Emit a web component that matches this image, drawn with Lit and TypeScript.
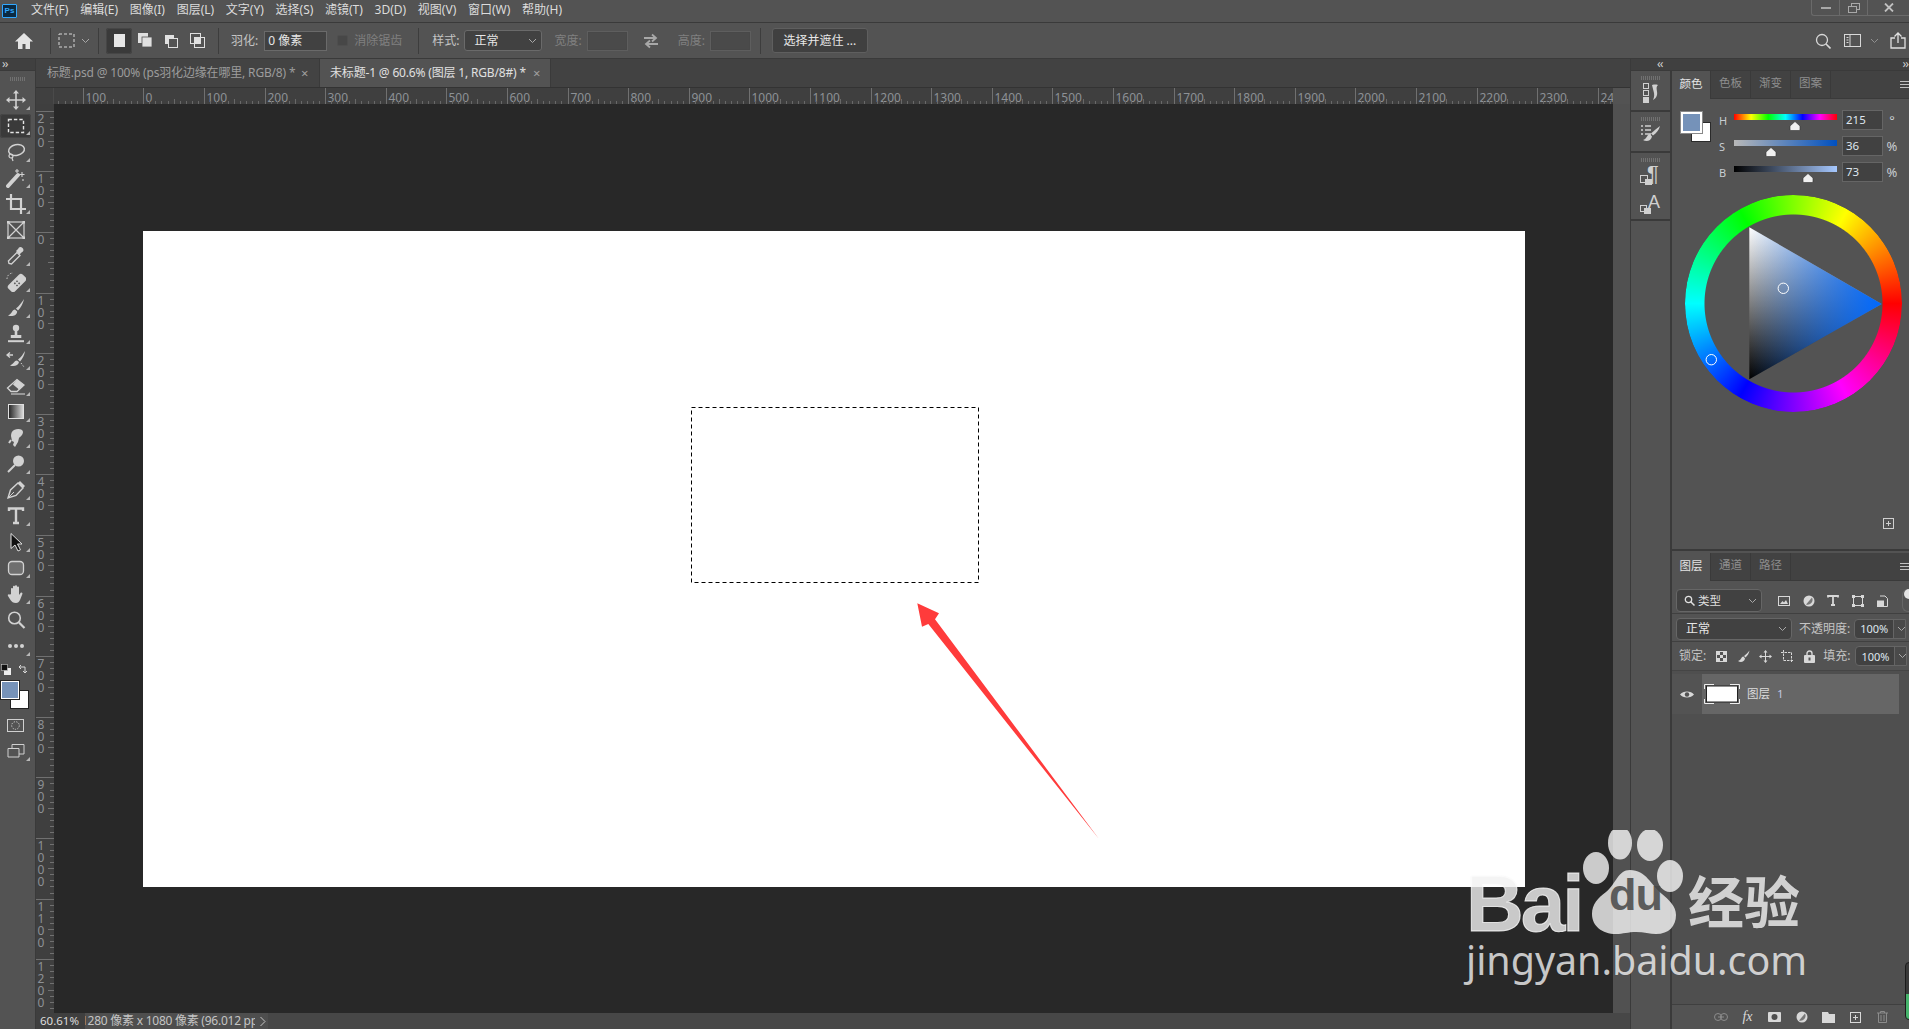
import { LitElement, html, css, svg } from "lit";
import { customElement } from "lit/decorators.js";

const MENU = ["文件(F)", "编辑(E)", "图像(I)", "图层(L)", "文字(Y)", "选择(S)", "滤镜(T)", "3D(D)", "视图(V)", "窗口(W)", "帮助(H)"];

const C = "#d2d2d2";
const chev = html`<svg class="chev" width="9" height="6" viewBox="0 0 9 6"><path d="M1 1l3.5 3.5L8 1" fill="none" stroke="#a8a8a8" stroke-width="1"/></svg>`;

const TOOLS: { i: any; m?: boolean; sel?: boolean }[] = [
  { m: true, i: svg`<path d="M10 3v14M3 10h14" stroke="${C}" stroke-width="1.6"/><path d="M10 0l3 3.5H7zM10 20l3-3.5H7zM0 10l3.5-3v6zM20 10l-3.5-3v6z" fill="${C}"/>` },
  { m: true, sel: true, i: svg`<rect x="2.5" y="3.5" width="15" height="13" fill="none" stroke="#e4e4e4" stroke-width="1.4" stroke-dasharray="3.4 2"/>` },
  { m: true, i: svg`<ellipse cx="10.5" cy="8" rx="8" ry="5.4" fill="none" stroke="${C}" stroke-width="1.5" transform="rotate(-12 10.5 8)"/><circle cx="5" cy="14" r="2" fill="none" stroke="${C}" stroke-width="1.2"/><path d="M6 16l1 3" stroke="${C}" stroke-width="1.2"/>` },
  { m: true, i: svg`<path d="M2 18L12 7" stroke="${C}" stroke-width="4" stroke-linecap="round"/><path d="M11 1v4M9 3h4M16 4v5M13.5 6.500h5M17 11v2" stroke="${C}" stroke-width="1.1"/>` },
  { m: true, i: svg`<path d="M5 0v15h15M0 5h15v15" fill="none" stroke="${C}" stroke-width="2.2"/>` },
  { i: svg`<rect x="2" y="2" width="16" height="16" fill="none" stroke="${C}" stroke-width="1.2"/><path d="M2 2l16 16M18 2L2 18" stroke="${C}" stroke-width="1.2"/><path d="M1 1h2.500v2.500H1zM16.500 1H19v2.500h-2.500zM1 16.500h2.500V19H1zM16.500 16.500H19V19h-2.500z" fill="${C}"/>` },
  { m: true, i: svg`<path d="M3 17.500l-.6-2.500L11 6.500l3 3-8.500 8.500z" fill="none" stroke="${C}" stroke-width="1.3"/><path d="M10 5l2-2 1-1.500c1-1 2.500-.6 3.500.4s1.400 2.500.4 3.500l-1.400 1-2 2z" fill="${C}"/>` },
  { m: true, i: svg`<g transform="rotate(45 11 11)"><rect x="6.500" y="1" width="9" height="20" rx="2.500" fill="${C}"/><path d="M9 9h1.500v1.500H9zM12 9h1.500v1.500H12zM9 12h1.500v1.500H9zM12 12h1.500v1.500H12z" fill="#535353"/></g><path d="M1 7a6 6 0 016-6" fill="none" stroke="${C}" stroke-dasharray="1.500 1.500"/>` },
  { m: true, i: svg`<path d="M18 1c-2 3-5 7-8 9.500l2 2C15 9.500 17.500 4.500 18 1z" fill="${C}"/><path d="M9 11.500c-3 0-2.500 4-7 6 4 1.500 9 0 9.200-4z" fill="${C}"/>` },
  { m: true, i: svg`<circle cx="10" cy="4" r="3.200" fill="${C}"/><path d="M8.700 6h2.600v5h4v3H4.800v-3h3.900z" fill="${C}"/><path d="M2 16.200h16v2H2z" fill="${C}"/>` },
  { m: true, i: svg`<path d="M19 1c-2 3-4 6.500-7 8.500l2 2c2.500-3 4.500-6.500 5-10.500z" fill="${C}"/><path d="M11 10.500c-3 0-3 3.500-7 5 4 1.500 8.500 0 9-3.500z" fill="${C}"/><path d="M2 5h5M4 2.500L1 5l3 2.500" fill="none" stroke="${C}" stroke-width="1.400"/><path d="M15 13l3 4" stroke="${C}" stroke-dasharray="1.500 1.500"/>` },
  { m: true, i: svg`<path d="M1.500 12L11 3.500l7 5.500-7 6.500H5z" fill="none" stroke="${C}" stroke-width="1.300"/><path d="M7 8.500L11 3.500l7 5.500-5 4.500z" fill="${C}"/><path d="M5 18h14" stroke="${C}" stroke-width="1.100"/>` },
  { m: true, i: svg`<defs><linearGradient id="tg"><stop offset="0" stop-color="#222"/><stop offset="1" stop-color="#ddd"/></linearGradient></defs><rect x="2.500" y="2.500" width="15" height="14" fill="url(#tg)" stroke="#e0e0e0"/>` },
  { m: true, i: svg`<path d="M8 2c4-2 9-1 9 2 0 3-3 5-4 6l-1 4-3 5-2-2 1-3-2-1-1-5c0-3 1-5 3-6z" fill="${C}"/><path d="M5 12l-2 3" stroke="${C}" stroke-width="2"/>` },
  { m: true, i: svg`<circle cx="12.500" cy="7" r="5.500" fill="${C}"/><path d="M9 11L2 18" stroke="${C}" stroke-width="2"/>` },
  { m: true, i: svg`<path d="M2 18l2.500-8L12 3l5 5-7 7.500z" fill="none" stroke="${C}" stroke-width="1.400"/><path d="M12 3l2-2 5 5-2 2z" fill="${C}"/><path d="M2 18l6-6" stroke="${C}"/>` },
  { m: true, i: svg`<path d="M3 5V2.500h14V5M10 2.500v14M7 17h6" fill="none" stroke="${C}" stroke-width="2.400"/>` },
  { m: true, i: svg`<path d="M5 1.500v15l4-3.500 3 6 2.500-1.200-3-5.800H16z" fill="#111" stroke="#e0e0e0" stroke-width="1"/>` },
  { m: true, i: svg`<rect x="2.500" y="3.500" width="15" height="13" rx="3.500" fill="#6f6f6f" stroke="${C}" stroke-width="1.300"/>` },
  { m: true, i: svg`<path d="M5 10V5c0-1.300 2-1.300 2 0v3V2.800c0-1.300 2-1.300 2 0V8V2.200c0-1.300 2-1.300 2 0V8V3.500c0-1.300 2-1.300 2 0V11l1.500-2c1-1 2.500 0 1.800 1.200L14 16c-1 2-2 3-4 3-3 0-4-1-5.500-3L2 12c-.8-1.300.8-2.300 1.800-1.300z" fill="${C}"/>` },
  { m: false, i: svg`<circle cx="8.500" cy="8" r="5.800" fill="none" stroke="${C}" stroke-width="1.600"/><path d="M13 12.500l5.500 5.500" stroke="${C}" stroke-width="2.200"/>` },
  { m: true, i: svg`<circle cx="4" cy="10" r="2" fill="${C}"/><circle cx="10" cy="10" r="2" fill="${C}"/><circle cx="16" cy="10" r="2" fill="${C}"/>` },
];

@customElement("app-root")
export class AppRoot extends LitElement {
  static styles = css`
    :host {
      display: block;
      width: 1909px;
      height: 1029px;
      overflow: hidden;
      position: relative;
      background: #535353;
      font: 12px/1 "Noto Sans", "Noto Sans CJK SC", sans-serif;
      color: #d6d6d6;
    }
    svg { display: block; flex: none; }
    .app { display: flex; flex-direction: column; height: 100%; }

    .menubar { height: 22px; flex: none; display: flex; align-items: center; border-bottom: 1px solid #3a3a3a; position: relative; box-sizing: content-box; }
    .logo { width: 15px; height: 14px; margin-left: 2px; background: #0b2a42; border: 1px solid #31a8ff; box-sizing: border-box; color: #31a8ff; font: bold 8px/12px "Liberation Sans", sans-serif; text-align: center; border-radius: 1px; }
    .menus { display: flex; gap: 11.700px; margin-left: 14px; padding-bottom: 2px; color: #dcdcdc; font-size: 12px; }
    .winbtns { margin-left: auto; display: flex; height: 16px; align-self: flex-start; width: 98px; border: 1px solid #6a6a6a; border-width: 0 0 1px 1px; box-sizing: border-box; border-radius: 0 0 0 3px; }
    .winbtns div { display: flex; align-items: center; justify-content: center; height: 100%; border-left: 1px solid #6a6a6a; width: 27px; }
    .winbtns div:first-child { border-left: none; }
    .winbtns div:last-child { flex: 1; }

    .optbar { height: 35px; flex: none; display: flex; align-items: center; border-bottom: 1px solid #3a3a3a; }
    .sep { width: 1px; height: 26px; background: #3d3d3d; flex: none; }
    .homeseg { width: 50px; padding-left: 14px; box-sizing: border-box; }
    .marq { width: 47px; padding-left: 7px; box-sizing: border-box; display: flex; align-items: center; gap: 6px; }
    .modes { display: flex; margin-left: 7px; margin-right: 8px; }
    .modes div { width: 26px; height: 26px; display: flex; align-items: center; justify-content: center; border-radius: 3px; }
    .modes .on { background: #3a3a3a; box-shadow: inset 0 0 0 1px #464646; }
    .lab { color: #c4c4c4; white-space: nowrap; }
    .dim { color: #808080; }
    .ml3 { margin-left: 3px; } .ml4 { margin-left: 4px; } .ml5 { margin-left: 5px; } .ml6 { margin-left: 6px; } .ml7 { margin-left: 7px; }
    .ml9 { margin-left: 9px; } .ml10 { margin-left: 10px; } .ml11 { margin-left: 11px; } .ml12 { margin-left: 12px; } .ml13 { margin-left: 13px; }
    .ml14 { margin-left: 14px; } .ml16 { margin-left: 16px; } .ml17 { margin-left: 17px; } .ml18 { margin-left: 18px; }
    .inp { box-sizing: border-box; height: 20px; border: 1px solid #6a6a6a; background: #414141; color: #e6e6e6; display: flex; align-items: center; padding-left: 3px; flex: none; }
    .w63 { width: 63px; }
    .inp.off { width: 41px; background: #4a4a4a; border-color: #5e5e5e; box-shadow: inset 0 0 0 1px #484848; }
    .check { width: 9px; height: 9px; background: #474747; border: 1px solid #4e4e4e; border-radius: 2px; flex: none; }
    .select { box-sizing: border-box; height: 21px; width: 78px; border: 1px solid #6a6a6a; background: #414141; border-radius: 3px; display: flex; align-items: center; justify-content: space-between; padding: 0 4px 0 9px; color: #e6e6e6; flex: none; }
    .btn { box-sizing: border-box; height: 25px; width: 96px; background: #404040; border: 1px solid #5f5f5f; border-radius: 3px; display: flex; align-items: center; justify-content: center; color: #e8e8e8; flex: none; }
    .optright { margin-left: auto; display: flex; align-items: center; padding-right: 3px; }

    .main { flex: 1; display: flex; min-height: 0; }
    .toolbox { width: 35px; flex: none; border-right: 1px solid #3a3a3a; box-sizing: content-box; display: flex; flex-direction: column; }
    .tbhead { height: 11px; background: #404040; border-bottom: 1px solid #3a3a3a; color: #d0d0d0; font-size: 12px; line-height: 9px; padding-left: 2px; letter-spacing: -1px; flex: none; }
    .grip { height: 16px; display: flex; align-items: center; justify-content: center; flex: none; }
    .gripbar { width: 16px; height: 4px; background: repeating-linear-gradient(90deg, #717171 0 1px, transparent 1px 2px); }
    .tool { height: 26px; width: 31px; margin-left: 0; display: flex; align-items: center; justify-content: center; position: relative; border-radius: 3px; flex: none; }
    .tool.sel { background: #3a3a3a; box-shadow: inset 0 0 0 1px #464646; height: 24px; margin: 1px 0; }
    .tool.m::after { content: ""; position: absolute; right: 1px; bottom: 3px; border-style: solid; border-width: 0 0 4px 4px; border-color: transparent transparent #b8b8b8 transparent; }
    .colors { height: 48px; position: relative; flex: none; }
    .mini { display: flex; justify-content: space-between; padding: 5px 7px 0 1px; }
    .fg { position: absolute; left: 1px; top: 22px; width: 18px; height: 18px; background: #7592b9; border: 1px solid #fff; outline: 1px solid #222; box-sizing: border-box; z-index: 1; }
    .bg { position: absolute; left: 10px; top: 31px; width: 19px; height: 19px; background: #fff; border: 1px solid #222; box-sizing: border-box; }
    .tool2 { height: 26px; display: flex; align-items: center; justify-content: center; width: 31px; flex: none; position: relative; }
    .colors + .tool2 { margin-top: 5px; }

    .doc { width: 1594px; flex: none; display: flex; flex-direction: column; }
    .tabs { height: 29px; flex: none; display: flex; background: #424242; border-bottom: 1px solid #333; box-sizing: border-box; }
    .tab { display: flex; align-items: center; padding-left: 11px; box-sizing: border-box; height: 100%; color: #9c9c9c; position: relative; white-space: nowrap; letter-spacing: -0.170px; }
    .tab b { font-weight: 400; position: absolute; color: #a0a0a0; font-size: 13px; }
    .tab1 { width: 284px; background: #434343; border-right: 1px solid #3a3a3a; }
    .tab1 b { left: 265px; }
    .tab2 { width: 231px; background: #535353; color: #e0e0e0; padding-left: 10px; border-right: 1px solid #3a3a3a; }
    .tab2 b { left: 213px; }
    .rulerrow { height: 16px; flex: none; display: flex; }
    .corner { width: 18px; background: #404040; flex: none; border-right: 1px solid #4a4a4a; box-sizing: border-box; }
    .hr { width: 1559px; height: 16px; background: #3f3f3f; flex: none; overflow: visible; }
    .rfill { flex: 1; background: #535353; }
    .rtext { font: 12px "Noto Sans", sans-serif; fill: #8d9196; }
    .work { flex: 1; display: flex; min-height: 0; }
    .vr { width: 18px; background: #3f3f3f; flex: none; }
    .canvas { width: 1559px; flex: none; background: #282828; padding: 127px 0 0 89px; box-sizing: border-box; overflow: hidden; }
    .page { width: 1382px; height: 656px; background: #fff; position: relative; }
    .overlay { position: absolute; left: 0; top: 0; }
    .scroll { flex: 1; background: #515151; }
    .status { height: 16px; flex: none; display: flex; background: #474747; color: #c4c4c4; font-size: 12px; align-items: center; }
    .zoomv { width: 49px; height: 100%; background: #3f3f3f; padding-left: 4px; box-sizing: border-box; display: flex; align-items: center; color: #dcdcdc; font-size: 11.500px; }
    .sinfo { width: 170px; height: 100%; overflow: hidden; background: #4e4e4e; white-space: nowrap; display: flex; align-items: center; letter-spacing: -0.250px; }
    .sinfo span { margin-left: -4px; }
    .sarrow { width: 13px; height: 100%; background: #4e4e4e; display: flex; align-items: center; padding-left: 4px; box-sizing: border-box; }

    .right { width: 278px; flex: none; border-left: 1px solid #3a3a3a; display: flex; flex-direction: column; }
    .rstrip { height: 11px; flex: none; background: #404040; border-bottom: 1px solid #3a3a3a; display: flex; justify-content: space-between; font-size: 12px; line-height: 9px; color: #d0d0d0; letter-spacing: -1px; padding-left: 26px; padding-right: 1px; }
    .rbody { flex: 1; display: flex; min-height: 0; }
    .dock { width: 39px; flex: none; margin-left: 0; border-right: 2px solid #3a3a3a; display: flex; flex-direction: column; }
    .dgroup { border-bottom: 2px solid #3a3a3a; display: flex; flex-direction: column; align-items: center; flex: none; }
    .dg1 { height: 39px; } .dg2 { height: 39px; } .dg3 { height: 66px; }
    .dgrip { height: 8px; width: 20px; margin-top: 3px; background: repeating-linear-gradient(90deg, #717171 0 1px, transparent 1px 2px) center / 100% 4px no-repeat; flex: none; }
    .up2 { margin-top: -2px; }
    .down5 { margin-top: 5px; }
    .panels { flex: 1; min-width: 0; display: flex; flex-direction: column; overflow: hidden; }
    .ptabs { height: 28px; flex: none; display: flex; background: #424242; position: relative; }
    .ptab { width: 40px; display: flex; align-items: center; justify-content: center; color: #8e8e8e; font-size: 11.500px; border-right: 1px solid #3a3a3a; border-bottom: 1px solid #3a3a3a; box-sizing: border-box; padding-bottom: 3px; }
    .ptab.on { background: #535353; color: #e4e4e4; width: 39px; border-bottom: none; }
    .ptabfill { flex: 1; border-bottom: 1px solid #3a3a3a; display: flex; justify-content: flex-end; align-items: center; }
    .upper { height: 480px; flex: none; display: flex; flex-direction: column; border-bottom: 2px solid #3a3a3a; box-sizing: border-box; }
    .cbody { display: flex; padding: 11px 0 0 9px; }
    .sw { position: relative; width: 38px; height: 32px; flex: none; margin-top: 2px; }
    .sw .f { position: absolute; left: 0; top: 0; width: 21px; height: 21px; background: #7592b9; border: 2px solid #fff; outline: 1px solid #888; outline-offset: 0; box-sizing: border-box; z-index: 1; }
    .sw .b { position: absolute; left: 10px; top: 10px; width: 20px; height: 20px; background: #fff; border: 1px solid #2a2a2a; box-sizing: border-box; }
    .rows { display: flex; flex-direction: column; gap: 6px; }
    .crow { display: flex; height: 20px; color: #c8cdd2; }
    .clab { width: 15px; font-size: 11px; line-height: 22px; }
    .track { width: 103px; height: 6px; margin-top: 4px; position: relative; flex: none; }
    .thumb { position: absolute; top: 7px; }
    .hue { background: linear-gradient(90deg, #f00, #ff0 16.600%, #0f0 33.300%, #0ff 50%, #00f 66.600%, #f0f 83.300%, #f00); }
    .sat { background: linear-gradient(90deg, #b8b8b8, #0050c0); }
    .bri { background: linear-gradient(90deg, #000, #a6c8ff); }
    .val { box-sizing: border-box; width: 41px; height: 20px; margin-left: 5px; border: 1px solid #656565; background: #414141; color: #dfe6ee; font-size: 11.500px; display: flex; align-items: center; padding-left: 3px; flex: none; }
    .unit { width: 18px; text-align: center; font-size: 13px; line-height: 20px; color: #c8cdd2; }
    .wheelwrap { margin: 13px 0 0 13px; width: 217px; height: 217px; position: relative; flex: none; }
    .wheel { width: 217px; height: 217px; border-radius: 50%; background: conic-gradient(from 90deg, #f00, #f0f, #00f, #0ff, #0f0, #ff0, #f00); -webkit-mask: radial-gradient(circle, transparent 88.500px, #000 89.500px); mask: radial-gradient(circle, transparent 88.500px, #000 89.500px); }
    .pfoot { margin-top: auto; padding: 0 15px 20px 0; display: flex; justify-content: flex-end; }

    .lower { flex: 1; display: flex; flex-direction: column; min-height: 0; padding-top: 2px; box-sizing: border-box; position: relative; }
    .lrow { display: flex; align-items: center; flex: none; }
    .l1 { height: 33px; border-bottom: 1px solid #404040; padding-left: 4px; box-sizing: border-box; padding-top: 7px; }
    .l2 { height: 28px; border-bottom: 1px solid #404040; padding-left: 4px; box-sizing: border-box; padding-top: 2px; }
    .l3 { height: 29px; border-bottom: 1px solid #454545; padding-left: 7px; box-sizing: border-box; }
    .filter { box-sizing: border-box; width: 86px; height: 23px; border: 1px solid #666; border-radius: 4px; background: #414141; display: flex; align-items: center; padding: 0 4px 0 7px; gap: 3px; color: #dedede; flex: none; font-size: 11.500px; }
    .filter .g { flex: 1; }
    .licons { display: flex; gap: 0; margin-left: 10px; align-items: center; }
    .licons div { width: 24.500px; display: flex; justify-content: center; }
    .toggle { width: 14px; height: 23px; margin-left: 7px; border: 1px solid #666; border-right: none; border-radius: 6px 0 0 6px; position: relative; box-sizing: border-box; flex: none; }
    .toggle::after { content: ""; position: absolute; left: 1px; top: -1px; width: 10px; height: 10px; background: #e4e4e4; border-radius: 50%; }
    .bl { box-sizing: border-box; width: 116px; height: 22px; border: 1px solid #666; border-radius: 4px; background: #414141; display: flex; align-items: center; justify-content: space-between; padding: 0 4px 0 9px; color: #e6e6e6; flex: none; }
    .pct { box-sizing: border-box; width: 52px; height: 20px; border: 1px solid #656565; border-radius: 4px 0 0 4px; background: #414141; display: flex; align-items: center; flex: none; color: #dfe6ee; font-size: 11px; overflow: hidden; }
    .pct span { width: 38px; text-align: center; flex: none; }
    .pct i { width: 14px; height: 100%; border-left: 1px solid #656565; background: #4a4a4a; display: flex; align-items: center; justify-content: center; flex: none; }
    .lk { display: flex; margin-left: 4px; }
    .lk div { width: 22px; display: flex; justify-content: center; align-items: center; }
    .layers { flex: 1; background: #4f4f4f; min-height: 0; }
    .layer { height: 40px; margin-top: 3px; display: flex; background: #535353; width: 227px; }
    .eye { width: 30px; display: flex; align-items: center; justify-content: center; flex: none; }
    .lbody { width: 197px; background: #666; display: flex; align-items: center; flex: none; padding-left: 2px; box-sizing: border-box; color: #dcdcdc; }
    .thumbl { width: 36px; height: 20px; position: relative; flex: none; }
    .thumbl svg { position: absolute; left: 0; top: 0; }
    .lname { margin-left: 7px; font-size: 11.500px; }
    .lname em { font-style: normal; color: #c0c8e0; margin-left: 7px; }
    .lfoot { height: 25px; flex: none; border-top: 1px solid #3f3f3f; display: flex; align-items: center; box-sizing: border-box; padding-left: 35px; }
    .lfoot div { width: 27px; display: flex; justify-content: center; align-items: center; position: relative; }
    .fx { font: italic 14px "Liberation Serif", serif; color: #d8d8d8; }
    .meter { position: absolute; right: -1px; bottom: 9px; width: 5px; height: 58px; border: 1px solid #1c1c1c; border-radius: 4px 0 0 4px; background: linear-gradient(180deg, #3a3a3a 0 55%, #46b46c 55% 100%); box-sizing: border-box; }

    .wm { position: absolute; left: 1460px; top: 830px; width: 360px; height: 165px; color: rgba(255,255,255,.76); text-shadow: 0 0 1px rgba(0,0,0,.18); pointer-events: none; }
    .wmtop { display: flex; align-items: flex-start; height: 104px; }
    .bai { font: bold 80px/1 "Liberation Sans", sans-serif; -webkit-text-stroke: 1px rgba(255,255,255,.76); margin: 34px 0 0 6px; letter-spacing: -3px; width: 114px; flex: none; }
    .paw { margin-left: 0; flex: none; position: relative; width: 108px; height: 104px; margin-right: 0; }
    .du { position: absolute; left: 29px; top: 42px; font: bold 45px/1 "Liberation Sans", sans-serif; color: rgba(70,70,70,.85); letter-spacing: -1px; text-shadow: none; }
    .jy { font: bold 56px/1 "Noto Sans CJK SC", sans-serif; margin-top: 41px; flex: none; margin-left: 0; white-space: nowrap; }
    .url { font: 39.400px/1 "Noto Sans", sans-serif; margin: 7px 0 0 6px; white-space: nowrap; }
  `;

  hticks() {
    const out: any[] = [];
    const x0 = 143.3 - 54;
    for (let i = -20; i <= 250; i++) {
      const x = Math.round(x0 + (i * 60.6) / 10) + 0.5;
      if (x < 0 || x > 1559) continue;
      const h = i % 10 === 0 ? 16 : i % 5 === 0 ? 5 : 3;
      out.push(svg`<line x1="${x}" x2="${x}" y1="${16 - h}" y2="16" stroke="${i % 10 === 0 ? "#707070" : "#686868"}"/>`);
      if (i % 10 === 0 && x < 1535) {
        const v = Math.abs(i * 10);
        out.push(svg`<text class="rtext" x="${x + 2}" y="14">${v}</text>`);
      } else if (i % 10 === 0) {
        out.push(svg`<text class="rtext" x="${x + 2}" y="14">24</text>`);
      }
    }
    return out;
  }

  vticks() {
    const out: any[] = [];
    const y0 = 232 - 104;
    for (let i = -20; i <= 130; i++) {
      const y = Math.round(y0 + (i * 60.6) / 10) + 0.5;
      if (y < 0 || y > 909) continue;
      const major = i % 10 === 0;
      const x1 = major ? 0 : i % 5 === 0 ? 12 : 14;
      out.push(svg`<line x1="${x1}" x2="18" y1="${y}" y2="${y}" stroke="#707070"/>`);
      if (major) {
        const digits = String(Math.abs(i * 10)).split("");
        out.push(svg`<text class="rtext" y="${y + 11}">${digits.map((d, k) => svg`<tspan x="1.500" dy="${k === 0 ? 0 : 12}">${d}</tspan>`)}</text>`);
      }
    }
    return out;
  }

  thumbIcon() {
    return html`<svg width="12" height="10" viewBox="0 0 12 10"><path d="M6 .5L11 5v3.500a1 1 0 01-1 1H2a1 1 0 01-1-1V5z" fill="#f0f0f0" stroke="#333" stroke-width=".6"/></svg>`;
  }

  drawOptions() {
    const modeIc = "#e0e0e0";
    return html`<div class="optbar">
      <div class="homeseg"><svg width="20" height="18" viewBox="0 0 20 18"><path d="M10 1L1 9.500h3V17h4.500v-5h3v5H16V9.500h3z" fill="#e4e4e4"/></svg></div>
      <div class="sep"></div>
      <div class="marq"><svg width="17" height="15" viewBox="0 0 17 15"><rect x="1" y="1" width="15" height="13" fill="none" stroke="#d8d8d8" stroke-dasharray="3 2"/></svg>${chev}</div>
      <div class="sep"></div>
      <div class="modes">
        <div class="on"><svg width="11" height="13"><rect width="11" height="13" fill="#e6e6e6"/></svg></div>
        <div><svg width="15" height="15"><rect width="10" height="10" fill="${modeIc}"/><rect x="4" y="4" width="10" height="10" fill="${modeIc}" stroke="#535353" stroke-width=".8"/></svg></div>
        <div><svg width="14" height="14"><rect x="1" y="1" width="9" height="9" fill="${modeIc}"/><rect x="4.500" y="4.500" width="9" height="9" fill="#535353" stroke="${modeIc}"/></svg></div>
        <div><svg width="15" height="15"><rect x=".5" y=".5" width="10" height="10" fill="none" stroke="${modeIc}"/><rect x="4.500" y="4.500" width="10" height="10" fill="none" stroke="${modeIc}"/><rect x="4.500" y="4.500" width="6" height="6" fill="${modeIc}"/></svg></div>
      </div>
      <div class="sep"></div>
      <span class="lab ml12">羽化:</span>
      <div class="inp w63 ml6">0 像素</div>
      <div class="check ml10"></div>
      <span class="lab dim ml6">消除锯齿</span>
      <div class="sep ml16"></div>
      <span class="lab ml13">样式:</span>
      <div class="select ml5">正常 ${chev}</div>
      <span class="lab dim ml12">宽度:</span>
      <div class="inp off ml5"></div>
      <svg class="ml14" width="18" height="16" viewBox="0 0 18 16"><path d="M2 5h11M10 1.500L14 5l-4 3.500M16 11H5M8 7.500L4 11l4 3.500" fill="none" stroke="#a8a8a8" stroke-width="1.800"/></svg>
      <span class="lab dim ml18">高度:</span>
      <div class="inp off ml5"></div>
      <div class="sep ml9"></div>
      <div class="btn ml11">选择并遮住 ...</div>
      <div class="optright">
        <svg width="16" height="16" viewBox="0 0 16 16"><circle cx="7" cy="7" r="5.500" fill="none" stroke="#d8d8d8" stroke-width="1.300"/><path d="M11 11l4.500 4.500" stroke="#d8d8d8" stroke-width="1.600"/></svg>
        <svg class="ml13" width="17" height="13" viewBox="0 0 17 13"><rect x=".5" y=".5" width="16" height="12" fill="none" stroke="#d8d8d8"/><path d="M6 .5v12" stroke="#d8d8d8"/><path d="M2.500 3.500h2M2.500 6h2M2.500 8.500h2" stroke="#d8d8d8"/></svg>
        <svg class="ml9" width="9" height="6" viewBox="0 0 9 6"><path d="M1 1l3.500 3.500L8 1" fill="none" stroke="#909090"/></svg>
        <svg class="ml11" width="16" height="17" viewBox="0 0 16 17"><path d="M5 6H1v10h14V6h-4" fill="none" stroke="#e0e0e0" stroke-width="1.300"/><path d="M8 11V1.500M4.500 4.500L8 1l3.500 3.500" fill="none" stroke="#e0e0e0" stroke-width="1.300"/></svg>
      </div>
    </div>`;
  }

  drawToolbox() {
    return html`<div class="toolbox">
      <div class="tbhead">››</div>
      <div class="grip"><div class="gripbar"></div></div>
      ${TOOLS.map((t) => html`<div class="tool ${t.m ? "m" : ""} ${t.sel ? "sel" : ""}"><svg width="20" height="20" viewBox="0 0 20 20">${t.i}</svg></div>`)}
      <div class="colors">
        <div class="mini">
          <svg width="10" height="11" viewBox="0 0 10 11"><rect x="3" y="4" width="7" height="7" fill="#eee"/><rect x=".5" y=".5" width="6" height="6" fill="#111" stroke="#ddd" stroke-width=".5"/></svg>
          <svg width="10" height="10" viewBox="0 0 10 10"><path d="M1 3h6v6M1 3l2-2M1 3l2 2M7 9L5 7M7 9l2-2" fill="none" stroke="#d8d8d8"/></svg>
        </div>
        <div class="fg"></div><div class="bg"></div>
      </div>
      <div class="tool2"><svg width="17" height="13" viewBox="0 0 17 13"><rect x=".5" y=".5" width="16" height="12" fill="none" stroke="#d0d0d0"/><circle cx="8.500" cy="6.500" r="3.800" fill="none" stroke="#d0d0d0" stroke-dasharray="1.300 1.300"/></svg></div>
      <div class="tool2 tool m"><svg width="18" height="14" viewBox="0 0 18 14"><path d="M1 4.500h11V13H1z" fill="none" stroke="#d0d0d0"/><path d="M5 4V.5h12V10h-5" fill="none" stroke="#d0d0d0"/></svg></div>
    </div>`;
  }

  drawDoc() {
    return html`<div class="doc">
      <div class="tabs">
        <div class="tab tab1">标题.psd @ 100% (ps羽化边缘在哪里, RGB/8) *<b>×</b></div>
        <div class="tab tab2">未标题-1 @ 60.6% (图层 1, RGB/8#) *<b>×</b></div>
      </div>
      <div class="rulerrow">
        <div class="corner"></div>
        <svg class="hr" width="1559" height="16">${this.hticks()}</svg>
        <div class="rfill"></div>
      </div>
      <div class="work">
        <svg class="vr" width="18" height="909">${this.vticks()}</svg>
        <div class="canvas">
          <div class="page">
            <svg class="overlay" width="1382" height="656">
              <rect x="548.500" y="176.500" width="287" height="175" fill="none" stroke="#000" stroke-dasharray="4 3"/>
              <path d="M774.300 372.300L796 382.300 792 388.300 956 608 785.300 393 779 395.700z" fill="#ff3b3b"/>
            </svg>
          </div>
        </div>
        <div class="scroll"></div>
      </div>
      <div class="status">
        <div class="zoomv">60.61%</div>
        <div class="sinfo"><span>1280 像素 x 1080 像素 (96.012 ppi)</span></div>
        <div class="sarrow"><svg width="8" height="11" viewBox="0 0 8 11"><path d="M1.500 1l4.500 4.500L1.500 10" fill="none" stroke="#c4c4c4"/></svg></div>
      </div>
    </div>`;
  }

  drawDock() {
    const c = "#d0d0d0";
    return html`<div class="dock">
      <div class="dgroup dg1"><div class="dgrip"></div>
        <svg width="22" height="24" viewBox="0 0 22 24"><rect x="3.500" y="1.500" width="5" height="5" fill="none" stroke="${c}"/><rect x="3.500" y="8.500" width="5" height="5" fill="none" stroke="${c}"/><rect x="3" y="15" width="6" height="6" fill="${c}"/><path d="M12 3c4-1 6 0 6 0-3 2 0 7-1 10-.5 2-2 4-4 5 1.500-3 1.500-6 .5-9z" fill="${c}"/></svg>
      </div>
      <div class="dgroup dg2"><div class="dgrip"></div>
        <svg width="22" height="22" viewBox="0 0 22 22"><path d="M1 3h2M5 3h6M1 7h2M5 7h6M1 11h2M5 11h6" stroke="${c}" stroke-width="1.300"/><path d="M20 3c-3 2-6 5-9 7.500l2 2c3-2 6-5.500 7-9.500z" fill="${c}"/><path d="M10 11c-3 0-3 5-7 6 3.500 2 8 1 9-3.500z" fill="${c}"/></svg>
      </div>
      <div class="dgroup dg3"><div class="dgrip"></div>
        <svg class="up2" width="24" height="24" viewBox="0 0 24 24"><text x="8" y="19" font-size="22" fill="${c}" font-family="Liberation Sans">¶</text><rect x="1.500" y="13.500" width="7" height="7" fill="#535353" stroke="${c}"/><rect x="6" y="17" width="7" height="6" fill="${c}"/></svg>
        <svg class="down5" width="24" height="24" viewBox="0 0 24 24"><text x="9" y="17" font-size="18" fill="${c}" font-family="Liberation Sans">A</text><rect x="1.500" y="14.500" width="6" height="6" fill="#535353" stroke="${c}"/><rect x="5" y="17" width="7" height="6" fill="${c}"/></svg>
      </div>
    </div>`;
  }

  drawColor() {
    const rows = [
      { l: "H", cls: "hue", v: "215", u: "°", t: 0.59 },
      { l: "S", cls: "sat", v: "36", u: "%", t: 0.36 },
      { l: "B", cls: "bri", v: "73", u: "%", t: 0.72 },
    ];
    return html`<div class="upper">
      <div class="ptabs">
        <div class="ptab on">颜色</div><div class="ptab">色板</div><div class="ptab">渐变</div><div class="ptab">图案</div>
        <div class="ptabfill"><svg width="9" height="7"><path d="M0 .5h9M0 3.500h9M0 6.500h9" stroke="#c0c0c0"/></svg></div>
      </div>
      <div class="cbody">
        <div class="sw"><div class="f"></div><div class="b"></div></div>
        <div class="rows">
          ${rows.map((r) => html`<div class="crow">
            <span class="clab">${r.l}</span>
            <div class="track ${r.cls}"><div class="thumb" style="left:${r.t * 103 - 6}px">${this.thumbIcon()}</div></div>
            <div class="val">${r.v}</div><span class="unit">${r.u}</span>
          </div>`)}
        </div>
      </div>
      <div class="wheelwrap">
        <div class="wheel"></div>
        <svg class="overlay" width="217" height="217" viewBox="1685 195 217 217">
          <defs>
            <linearGradient id="tv" x1="0" y1="0" x2="0" y2="1"><stop offset="0" stop-color="#fff"/><stop offset="1" stop-color="#000"/></linearGradient>
            <linearGradient id="th" x1="0" y1="0" x2="1" y2="0"><stop offset="0" stop-color="#0069ff" stop-opacity="0"/><stop offset="1" stop-color="#0069ff"/></linearGradient>
          </defs>
          <path d="M1749.300 227.300L1881.700 304 1749.300 379.300z" fill="url(#tv)"/>
          <path d="M1749.300 227.300L1881.700 304 1749.300 379.300z" fill="url(#th)"/>
          <circle cx="1783.300" cy="288.300" r="5.200" fill="none" stroke="#fff"/>
          <circle cx="1711.300" cy="359.700" r="5.200" fill="none" stroke="#fff"/>
        </svg>
      </div>
      <div class="pfoot"><svg width="11" height="11"><rect x=".5" y=".5" width="10" height="10" fill="none" stroke="#d0d0d0"/><path d="M5.500 3v5M3 5.500h5" stroke="#d0d0d0"/></svg></div>
    </div>`;
  }

  drawLayers() {
    const c = "#d8d8d8";
    return html`<div class="lower">
      <div class="ptabs">
        <div class="ptab on">图层</div><div class="ptab">通道</div><div class="ptab">路径</div>
        <div class="ptabfill"><svg width="9" height="7"><path d="M0 .5h9M0 3.500h9M0 6.500h9" stroke="#c0c0c0"/></svg></div>
      </div>
      <div class="lrow l1">
        <div class="filter">
          <svg width="11" height="11" viewBox="0 0 11 11"><circle cx="4.500" cy="4.500" r="3.200" fill="none" stroke="#e0e0e0" stroke-width="1.300"/><path d="M7 7l3.500 3.500" stroke="#e0e0e0" stroke-width="1.500"/></svg>
          <span class="g">类型</span>${chev}
        </div>
        <div class="licons">
          <div><svg width="12" height="10"><rect x=".5" y=".5" width="11" height="9" fill="none" stroke="${c}"/><path d="M2 8l2.500-3 1.500 1.500L8 4l2 4z" fill="${c}"/></svg></div>
          <div><svg width="12" height="12"><circle cx="6" cy="6" r="5.500" fill="${c}"/><path d="M9 2.500A5 5 0 013 9.500z" fill="#777"/></svg></div>
          <div><svg width="12" height="11" viewBox="0 0 12 11"><path d="M1 2.500V1h10v1.500M6 1v9M4 10h4" fill="none" stroke="${c}" stroke-width="1.800"/></svg></div>
          <div><svg width="12" height="12"><rect x="1.500" y="1.500" width="9" height="9" fill="none" stroke="${c}"/><path d="M0 0h3v3H0zM9 0h3v3H9zM0 9h3v3H0zM9 9h3v3H9z" fill="${c}"/></svg></div>
          <div><svg width="11" height="12"><path d="M3 1h5l2.500 2.500V11.500H6" fill="none" stroke="${c}"/><rect x="0" y="5.500" width="7" height="6.500" fill="${c}"/></svg></div>
        </div>
        <div class="toggle"></div>
      </div>
      <div class="lrow l2">
        <div class="bl">正常 ${chev}</div>
        <span class="lab ml7">不透明度:</span>
        <div class="pct ml4"><span>100%</span><i>${chev}</i></div>
      </div>
      <div class="lrow l3">
        <span class="lab">锁定:</span>
        <div class="lk">
          <div><svg width="11" height="11"><rect x=".5" y=".5" width="10" height="10" fill="none" stroke="${c}"/><path d="M1 1h3v3H1zM7 1h3v3H7zM4 4h3v3H4zM1 7h3v3H1zM7 7h3v3H7z" fill="${c}"/></svg></div>
          <div><svg width="13" height="13" viewBox="0 0 13 13"><path d="M12.500 .5C11 2.500 9 4.500 7 6l1.500 1.500c2-1.800 3.500-4 4-7z" fill="${c}"/><path d="M6.500 6.500C4 6.500 4.500 10 1 11c2.500 1.800 6.500 1 7-2.500z" fill="${c}"/></svg></div>
          <div><svg width="13" height="13" viewBox="0 0 13 13"><path d="M6.500 1v11M1 6.500h11" stroke="${c}"/><path d="M6.500 0l2 2.500h-4zM6.500 13l2-2.500h-4zM0 6.500l2.500-2v4zM13 6.500l-2.500-2v4z" fill="${c}"/></svg></div>
          <div><svg width="13" height="13" viewBox="0 0 13 13"><path d="M2.500 0v10.500H13M0 2.500h10.500V13" fill="none" stroke="${c}" stroke-dasharray="2.500 1"/></svg></div>
          <div><svg width="11" height="13" viewBox="0 0 11 13"><rect y="5" width="11" height="8" rx="1" fill="${c}"/><path d="M3 5V3.500a2.500 2.500 0 015 0V5" fill="none" stroke="${c}" stroke-width="1.400"/><rect x="4.500" y="7.500" width="2" height="3" fill="#535353"/></svg></div>
        </div>
        <span class="lab ml3">填充:</span>
        <div class="pct ml5"><span>100%</span><i>${chev}</i></div>
      </div>
      <div class="layers">
        <div class="layer">
          <div class="eye"><svg width="14" height="9" viewBox="0 0 14 9"><path d="M0 4.500C3 .5 11 .5 14 4.500 11 8.500 3 8.500 0 4.500z" fill="#d8d8d8"/><circle cx="7" cy="4.500" r="2.200" fill="#535353"/></svg></div>
          <div class="lbody">
            <div class="thumbl">
              <svg width="36" height="20"><rect x="2.500" y="2" width="31" height="16" fill="#fff" stroke="#222"/><path d="M.5 5V.5H10M26 .5h9.500V5M.5 15v4.500H10M26 19.500h9.500V15" fill="none" stroke="#eee"/></svg>
            </div>
            <span class="lname">图层<em>1</em></span>
          </div>
        </div>
      </div>
      <div class="lfoot">
        <div><svg width="14" height="8" viewBox="0 0 14 8"><rect x=".5" y=".5" width="7" height="7" rx="3.500" fill="none" stroke="#8c8c8c"/><rect x="6.500" y=".5" width="7" height="7" rx="3.500" fill="none" stroke="#8c8c8c"/><path d="M4 4h6" stroke="#8c8c8c"/></svg></div>
        <div class="fx">fx</div>
        <div><svg width="13" height="10"><rect width="13" height="10" rx="1" fill="${c}"/><circle cx="6.500" cy="5" r="3" fill="#4f4f4f"/></svg></div>
        <div><svg width="12" height="12"><circle cx="6" cy="6" r="5.500" fill="${c}"/><path d="M9 2.500A5 5 0 013 9.500z" fill="#777"/></svg></div>
        <div><svg width="13" height="11" viewBox="0 0 13 11"><path d="M0 0h6l1 2h6v9H0z" fill="${c}"/></svg></div>
        <div><svg width="11" height="11"><rect x=".5" y=".5" width="10" height="10" fill="none" stroke="${c}"/><path d="M5.500 3v5M3 5.500h5" stroke="${c}"/></svg></div>
        <div><svg width="11" height="12" viewBox="0 0 11 12"><path d="M0 2h11M3.500 2V.5h4V2M1.500 2v9.500h8V2M4 4v6M7 4v6" fill="none" stroke="#8c8c8c"/></svg></div>
      </div>
      <div class="meter"></div>
    </div>`;
  }

  drawWatermark() {
    const p = "rgba(255,255,255,.76)";
    return html`<div class="wm">
      <div class="wmtop">
        <div class="bai">Bai</div>
        <div class="paw">
          <svg width="108" height="104" viewBox="1580 830 108 104">
            <ellipse cx="1596" cy="868" rx="13" ry="16" fill="${p}"/>
            <ellipse cx="1620" cy="843" rx="12" ry="16.500" fill="${p}"/>
            <ellipse cx="1650" cy="845" rx="13" ry="16" fill="${p}"/>
            <ellipse cx="1670" cy="876" rx="13" ry="16" fill="${p}"/>
            <path d="M1630 870c-12 0-14 14-24 22-8 6-14 12-14 22 0 12 10 20 24 20 7 0 12-2 20-2s14 2 20 2c13 0 20-8 20-19 0-9-7-15-14-21-11-9-16-24-32-24z" fill="${p}"/>
          </svg>
          <div class="du">du</div>
        </div>
        <div class="jy">经验</div>
      </div>
      <div class="url">jingyan.baidu.com</div>
    </div>`;
  }

  render() {
    return html`<div class="app">
      <div class="menubar">
        <div class="logo">Ps</div>
        <div class="menus">${MENU.map((m) => html`<span>${m}</span>`)}</div>
        <div class="winbtns">
          <div><svg width="10" height="2"><rect width="10" height="2" fill="#a8a8a8"/></svg></div>
          <div><svg width="12" height="10" viewBox="0 0 12 10"><rect x="3.500" y=".5" width="8" height="6" fill="none" stroke="#a8a8a8"/><rect x=".5" y="3.500" width="8" height="6" fill="#535353" stroke="#a8a8a8"/></svg></div>
          <div><svg width="10" height="9" viewBox="0 0 10 9"><path d="M1 .5l8 8M9 .5l-8 8" stroke="#c0c0c0" stroke-width="1.800"/></svg></div>
        </div>
      </div>
      ${this.drawOptions()}
      <div class="main">
        ${this.drawToolbox()}
        ${this.drawDoc()}
        <div class="right">
          <div class="rstrip"><span>‹‹</span><span>››</span></div>
          <div class="rbody">
            ${this.drawDock()}
            <div class="panels">
              ${this.drawColor()}
              ${this.drawLayers()}
            </div>
          </div>
        </div>
      </div>
      ${this.drawWatermark()}
    </div>`;
  }
}
